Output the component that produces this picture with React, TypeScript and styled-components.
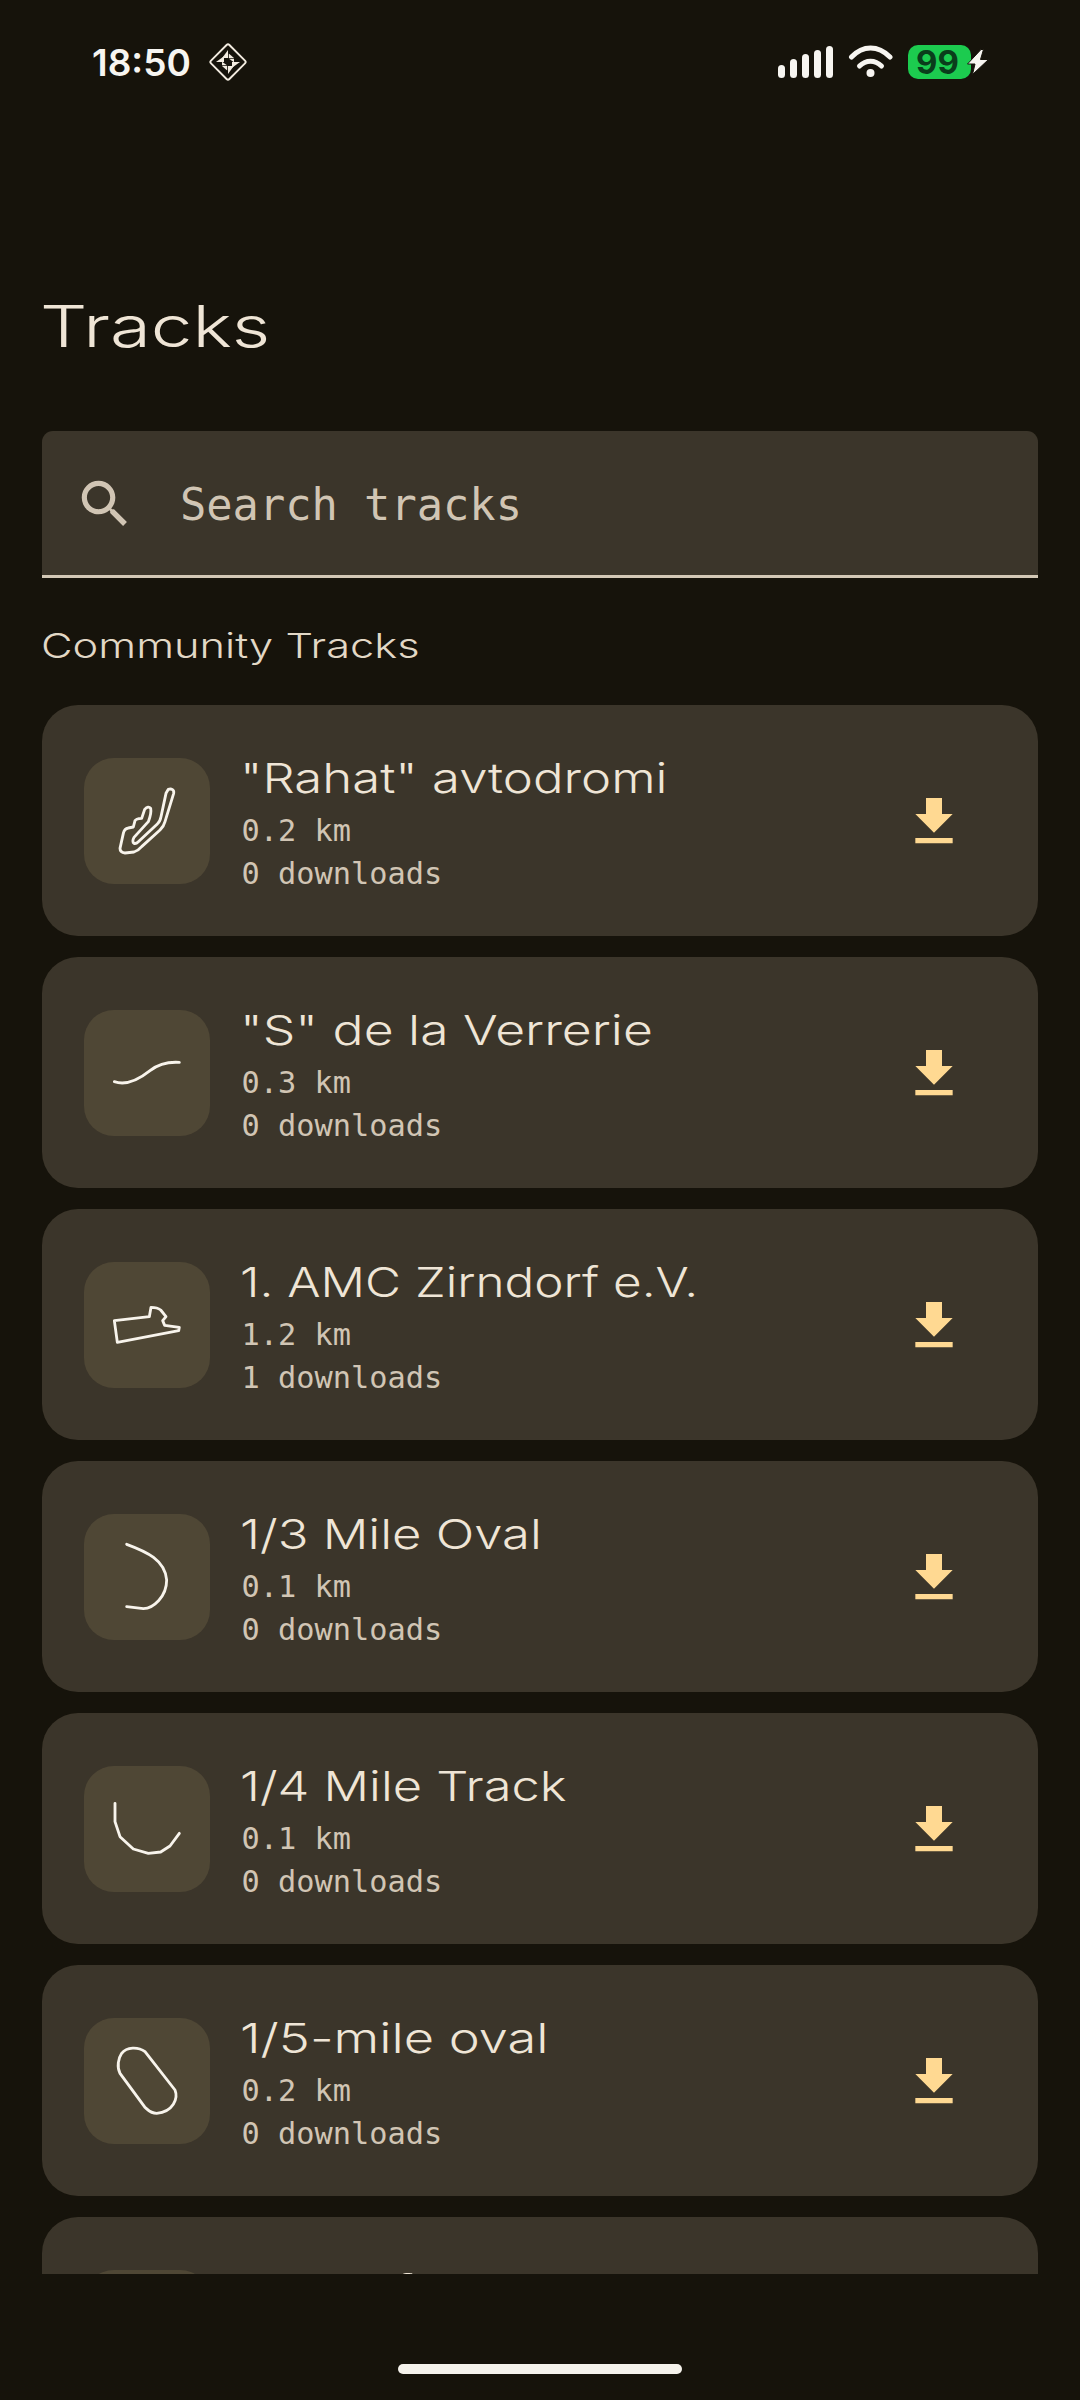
import React, { useLayoutEffect, useRef } from "react";
import styled, { createGlobalStyle } from "styled-components";

const Global = createGlobalStyle`
  html, body { margin: 0; padding: 0; background: #16130b; }
  * { box-sizing: border-box; }
`;

const Page = styled.div`
  width: 1080px;
  height: 2400px;
  background: #16130b;
  overflow: hidden;
  display: flex;
  flex-direction: column;
`;

const StatusBar = styled.div`
  height: 124px;
  flex: none;
  display: flex;
  align-items: center;
  padding: 0 91px 0 92px;
`;

const Clock = styled.span`
  font: 600 37px/1 Inter, "Liberation Sans", sans-serif;
  color: #f7f5f1;
  width: 117px;
`;

const StatusRight = styled.div`
  margin-left: auto;
  display: flex;
  align-items: center;
`;

const Battery = styled.div`
  width: 63px;
  height: 34px;
  margin: 0 -4px 0 14px;
  border-radius: 10px;
  background: #1ccb4f;
  color: #0a3d1b;
  font: 700 33px/34px Inter, "Liberation Sans", sans-serif;
  text-align: center;
  padding-right: 4px;
`;

const Main = styled.div`
  flex: none;
  padding: 0 42px;
  display: flex;
  flex-direction: column;
`;

const DisplayText = styled.span`
  display: block;
  font-family: Inter, "Liberation Sans", sans-serif;
  font-weight: 300;
  white-space: nowrap;
  transform-origin: left center;
  width: max-content;
`;

const PageTitle = styled(DisplayText)`
  margin: 168px 0 0 -2px;
  font-size: 57px;
  line-height: 70px;
  color: #efe5d6;
`;

const SearchField = styled.div`
  margin-top: 69px;
  height: 147px;
  background: #3b352a;
  border-radius: 11px 11px 0 0;
  border-bottom: 3px solid #d3c8b6;
  display: flex;
  align-items: center;
  padding-left: 32px;
  gap: 44px;
`;

const SearchIcon = styled.svg`
  width: 62px;
  height: 62px;
  margin-top: 2px;
  fill: #d1c5b4;
  flex: none;
`;

const MonoText = styled.span`
  font-family: "DejaVu Sans Mono", "Liberation Mono", monospace;
  color: #d1c5b4;
  white-space: nowrap;
`;

const Placeholder = styled(MonoText)`
  font-size: 43.7px;
  line-height: 60px;
  margin-top: 3px;
`;

const SectionTitle = styled(DisplayText)`
  margin: 43px 0 0 -1px;
  font-size: 34px;
  line-height: 50px;
  color: #e2d8c6;
`;

const Viewport = styled.div`
  margin-top: 34px;
  height: 1569px;
  overflow: hidden;
  display: flex;
  flex-direction: column;
  gap: 21px;
`;

const Card = styled.div`
  flex: none;
  height: 231px;
  background: #3b352a;
  border-radius: 36px;
  display: flex;
  align-items: center;
  padding: 0 72px 0 42px;
`;

const Thumb = styled.div`
  flex: none;
  width: 126px;
  height: 126px;
  border-radius: 30px;
  background: #4f4735;
`;

const TrackSvg = styled.svg`
  display: block;
  width: 126px;
  height: 126px;
  fill: none;
  stroke: #f8f4ec;
  stroke-width: 8.5;
  stroke-linejoin: round;
  stroke-linecap: round;
`;

const TextColumn = styled.div`
  align-self: flex-start;
  padding: 48px 0 0 31.5px;
  flex: 1;
  display: flex;
  flex-direction: column;
`;

const TrackName = styled(DisplayText)`
  font-size: 41px;
  line-height: 50px;
  color: #efe5d6;
  margin: 0 0 7px -1.5px;
`;

const Stat = styled(MonoText)`
  font-size: 30.3px;
  line-height: 42.5px;
  display: block;
`;

const DownloadIcon = styled.svg`
  flex: none;
  width: 64px;
  height: 64px;
  margin-top: 3px;
  fill: #ffd992;
`;

const HomeBar = styled.div`
  flex: none;
  width: 284px;
  height: 10px;
  margin: 90px auto 0;
  border-radius: 5px;
  background: #f5f2ec;
`;

const WifiGlyph = styled.svg`
  margin-left: 14px;
`;

const BoltGlyph = styled.svg`
  position: relative;
  z-index: 1;
`;

function Fit({ as: Comp, width, children }: { as: any; width: number; children: React.ReactNode }) {
  const ref = useRef<HTMLElement>(null);
  useLayoutEffect(() => {
    const el = ref.current;
    if (el) el.style.transform = `scaleX(${width / el.offsetWidth})`;
  }, [width]);
  return <Comp ref={ref}>{children}</Comp>;
}

function DiamondLogo() {
  return (
    <svg width="38" height="38" viewBox="0 0 38 38">
      <rect x="6" y="6" width="26" height="26" rx="2" transform="rotate(45 19 19)" fill="none" stroke="#f3ece0" strokeWidth="1.9" />
      <g fill="#f3ece0">
        <path d="M19 7v8h-5.800z" />
        <path d="M19 31v-8h5.800z" />
        <path d="M7 19h8v-5.800z" />
        <path d="M31 19h-8v5.800z" />
        <path d="M19.800 10.500l5.200 4.500h-5.200z" />
        <path d="M18.200 27.500l-5.200-4.500h5.200z" />
        <path d="M20 15.800h5v3.400z" />
        <path d="M18 22.200h-5v-3.400z" />
      </g>
    </svg>
  );
}

function Signal() {
  const bars = [
    [778, 65],
    [790, 59],
    [802, 54],
    [814, 50],
    [826, 46],
  ];
  return (
    <svg width="56" height="34" viewBox="778 45 56 34">
      {bars.map(([x, y]) => (
        <rect key={x} x={x} y={y} width="7" height={78 - y} rx="3.500" fill="#f7f5f1" />
      ))}
    </svg>
  );
}

function Wifi() {
  return (
    <WifiGlyph width="46" height="34" viewBox="848 45 46 34">
      <g fill="none" stroke="#f7f5f1" strokeWidth="5" strokeLinecap="round">
        <path d="M851.500 57C863 45 878 45 890 57" />
        <path d="M859.500 66C866 59.500 875 59.500 881.500 66" />
      </g>
      <circle cx="870.500" cy="73" r="4" fill="#f7f5f1" />
    </WifiGlyph>
  );
}

function Bolt() {
  return (
    <BoltGlyph width="22" height="26" viewBox="0 0 22 26">
      <path d="M14 0.500L0.500 15H8L5.500 25.500L21.500 10.500H13.500L16.500 0.500Z" fill="#f7f5f1" stroke="#16130b" strokeWidth="1" strokeLinejoin="round" />
    </BoltGlyph>
  );
}

const tracks = [
  {
    name: '"Rahat" avtodromi', w: 428, km: "0.2 km", dl: "0 downloads", top: 24,
    d: "M295 118C305 115 313 120 311 130L285 215Q282 228 270 240L215 290Q205 302 192 306L165 309Q150 308 150 295L160 250Q163 236 175 234L190 231L195 212Q198 206 215 205L224 178Q235 166 242 175Q245 190 235 215L192 262Q185 275 192 280Q198 282 205 275L262 222Q270 215 273 200L288 130Z",
  },
  {
    name: '"S" de la Verrerie', w: 413, km: "0.3 km", dl: "0 downloads", top: 30,
    d: "M133 245C170 258 205 240 240 212C265 192 295 185 328 187",
  },
  {
    name: "1. AMC Zirndorf e.V.", w: 458, km: "1.2 km", dl: "1 downloads", top: 36,
    d: "M133 212L238 200L243 172Q262 172 272 180L288 200L278 212L284 226L328 232L326 242L142 277Z",
  },
  {
    name: "1/3 Mile Oval", w: 302, km: "0.1 km", dl: "0 downloads", top: 42,
    d: "M170 133C230 155 285 180 290 240C290 290 250 325 220 326L170 320",
  },
  {
    name: "1/4 Mile Track", w: 327, km: "0.1 km", dl: "0 downloads", top: 48,
    d: "M135 160L135 215L150 260L190 297L235 310L272 306L300 288L328 250",
  },
  {
    name: "1/5-mile oval", w: 309, km: "0.2 km", dl: "0 downloads", top: 54,
    d: "M155 160C170 140 205 140 225 155L315 270C325 295 310 335 260 340C240 340 235 330 225 322L150 220C140 200 145 175 155 160Z",
  },
  {
    name: "1000 ft dirt oval", w: 430, km: "0.2 km", dl: "0 downloads", top: 60,
    d: "",
  },
];

export default function App() {
  return (
    <Page>
      <Global />
      <StatusBar>
        <Clock>18:50</Clock>
        <DiamondLogo />
        <StatusRight>
          <Signal />
          <Wifi />
          <Battery>99</Battery>
          <Bolt />
        </StatusRight>
      </StatusBar>
      <Main>
        <Fit as={PageTitle} width={230}>Tracks</Fit>
        <SearchField>
          <SearchIcon viewBox="0 0 24 24">
            <path d="M15.500 14h-.79l-.28-.27C15.410 12.590 16 11.110 16 9.500 16 5.910 13.090 3 9.500 3S3 5.910 3 9.500 5.910 16 9.500 16c1.610 0 3.090-.59 4.230-1.570l.27.28v.79l5 4.990L20.490 19l-4.990-5zm-6 0C7.010 14 5 11.990 5 9.500S7.010 5 9.500 5 14 7.010 14 9.500 11.990 14 9.500 14z" />
          </SearchIcon>
          <Placeholder>Search tracks</Placeholder>
        </SearchField>
        <Fit as={SectionTitle} width={379}>Community Tracks</Fit>
        <Viewport>
          {tracks.map((t) => (
            <Card key={t.name}>
              <Thumb>
                {t.d && (
                  <TrackSvg viewBox={`42 ${t.top} 378 378`}>
                    <path d={t.d} />
                  </TrackSvg>
                )}
              </Thumb>
              <TextColumn>
                <Fit as={TrackName} width={t.w}>{t.name}</Fit>
                <Stat>{t.km}</Stat>
                <Stat>{t.dl}</Stat>
              </TextColumn>
              <DownloadIcon viewBox="0 0 24 24">
                <path d="M19 9h-4V3H9v6H5l7 7 7-7zM5 18v2h14v-2H5z" />
              </DownloadIcon>
            </Card>
          ))}
        </Viewport>
        <HomeBar />
      </Main>
    </Page>
  );
}
